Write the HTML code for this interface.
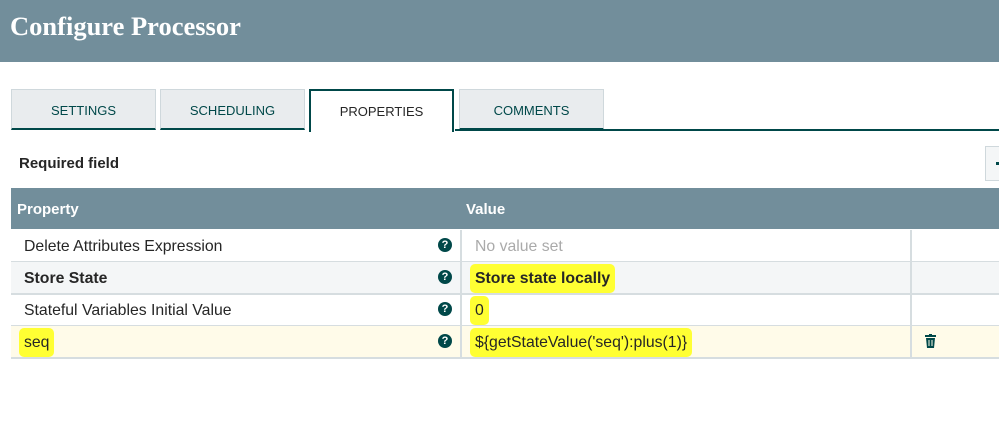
<!DOCTYPE html>
<html><head><style>
body{margin:0;width:999px;height:442px;background:#fff;font-family:"Liberation Sans",sans-serif;position:relative;overflow:hidden}
.hdr{position:absolute;left:0;top:0;width:999px;height:62px;background:#728e9b;color:#fff;font-family:"Liberation Serif",serif;font-weight:bold;font-size:26.5px;line-height:52px;padding-left:10px;box-sizing:border-box}
.tab{position:absolute;top:89px;height:41px;width:145px;background:#e9ecee;border:1px solid #cfd8dc;border-bottom:2px solid #004849;box-sizing:border-box;text-align:center;line-height:42px;font-size:13px;color:#004849}
.tab.act{background:#fff;border:2px solid #004849;border-bottom:none;color:#262626;height:43px}
.line{position:absolute;left:455px;top:129px;width:544px;height:2px;background:#004849}
.req{position:absolute;left:19px;top:155px;font-size:15px;font-weight:bold;color:#262626}
.add{position:absolute;left:985px;top:146px;width:20px;height:35px;border:1px solid #cfd8dc;background:#f4f6f7;box-sizing:border-box}
.add:after{content:"";position:absolute;left:10px;top:15px;width:6px;height:3px;background:#004849}
.th{position:absolute;left:11px;top:188px;width:988px;height:41px;background:#728e9b;color:#fff;font-weight:bold;font-size:15px;line-height:43px}
.row{position:absolute;left:11px;width:988px;height:31px;border-bottom:2px solid #d6dde0;font-size:15.8px;line-height:31px;color:#262626}
.c{position:absolute;top:1px;height:31px}
.q{position:absolute;left:427px;top:8px;width:14px;height:14px;border-radius:50%;background:#004849;color:#fff;font-size:11px;font-weight:bold;line-height:14px;text-align:center}
.d1{position:absolute;left:449px;top:0;width:2px;height:31px;background:#d6dde0}
.d2{position:absolute;left:899px;top:0;width:2px;height:31px;background:#d6dde0}
.hl{background:#ffff33;padding:6px 5px;margin-left:-5px;border-radius:5px}
</style></head><body>
<div class="hdr">Configure Processor</div>
<div class="tab" style="left:11px">SETTINGS</div>
<div class="tab" style="left:160px">SCHEDULING</div>
<div class="tab act" style="left:309px">PROPERTIES</div>
<div class="tab" style="left:459px">COMMENTS</div>
<div class="line"></div>
<div class="req">Required field</div>
<div class="add"></div>
<div class="th"><span style="position:absolute;left:6px">Property</span><span style="position:absolute;left:455px">Value</span></div>
<div class="row" style="top:230px"><span class="c" style="left:13px">Delete Attributes Expression</span><div class="q">?</div><div class="d1"></div><span class="c" style="left:464px;color:#aaa">No value set</span><div class="d2"></div></div>
<div class="row" style="top:262px;background:#f4f6f7;font-weight:bold"><span class="c" style="left:13px">Store State</span><div class="q">?</div><div class="d1"></div><span class="c" style="left:464px"><span class="hl">Store state locally</span></span><div class="d2"></div></div>
<div class="row" style="top:294px"><span class="c" style="left:13px">Stateful Variables Initial Value</span><div class="q">?</div><div class="d1"></div><span class="c" style="left:464px"><span class="hl">0</span></span><div class="d2"></div></div>
<div class="row" style="top:326px;background:#fffbe9"><span class="c" style="left:13px"><span class="hl">seq</span></span><div class="q">?</div><div class="d1"></div><span class="c" style="left:464px"><span class="hl">${getStateValue('seq'):plus(1)}</span></span><div class="d2"></div>
<svg style="position:absolute;left:914px;top:8px" width="11" height="14" viewBox="0 0 11 14"><rect x="0" y="1" width="11" height="2" fill="#004849"/><rect x="4" y="0" width="3" height="2" fill="#004849"/><path d="M1 4h9l-1 10H2z" fill="#004849"/><path d="M4 6v6M7 6v6" stroke="#fffbe9" stroke-width="1"/></svg></div>
</body></html>
